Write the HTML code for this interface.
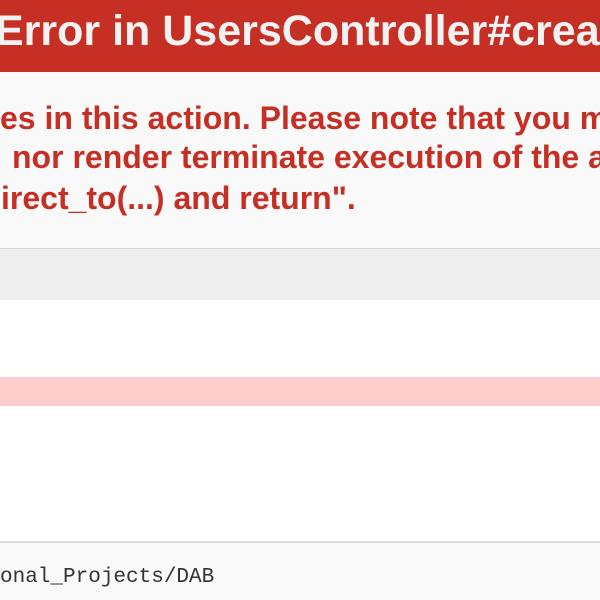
<!DOCTYPE html>
<html><head><style>
html,body{margin:0;padding:0;width:600px;height:600px;overflow:hidden;background:#fff;position:relative}
div{position:absolute;white-space:nowrap}
.clip{left:0;top:0;width:600px;height:600px;overflow:hidden}
.hdr{left:0;top:0;width:600px;height:72px;background:#c52f24}
.ht{left:-5px;top:7px;font:bold 43px "Liberation Sans",sans-serif;color:#f2f2f2}
.msg{left:0;top:72px;width:600px;height:176px;background:#f9f9f9;border-bottom:1px solid #d4d4d4}
.r{font:bold 32px "Liberation Sans",sans-serif;color:#c52f24;left:0}
.g{left:0;top:249px;width:600px;height:51px;background:#eeeeee}
.p{left:0;top:377px;width:600px;height:29px;background:#ffcccc}
.f{left:0;top:541px;width:600px;height:59px;background:#f9f9f9;border-top:2px solid #dcdcdc}
.m{left:0;top:566px;font:21px "Liberation Mono",monospace;color:#333}
</style></head><body>
<div class="clip">
<div class="hdr"></div>
<div class="ht">Error in UsersController#create</div>
<div class="msg"></div>
<div class="r" style="top:100px">es in this action. Please note that you ma</div>
<div class="r" style="top:139px;left:12px">nor render terminate execution of the ac</div>
<div class="r" style="top:180px;left:1px">irect_to(...) and return".</div>
<div class="g"></div>
<div class="p"></div>
<div class="f"></div>
<div class="m">onal_Projects/DAB</div>
</div>
</body></html>
